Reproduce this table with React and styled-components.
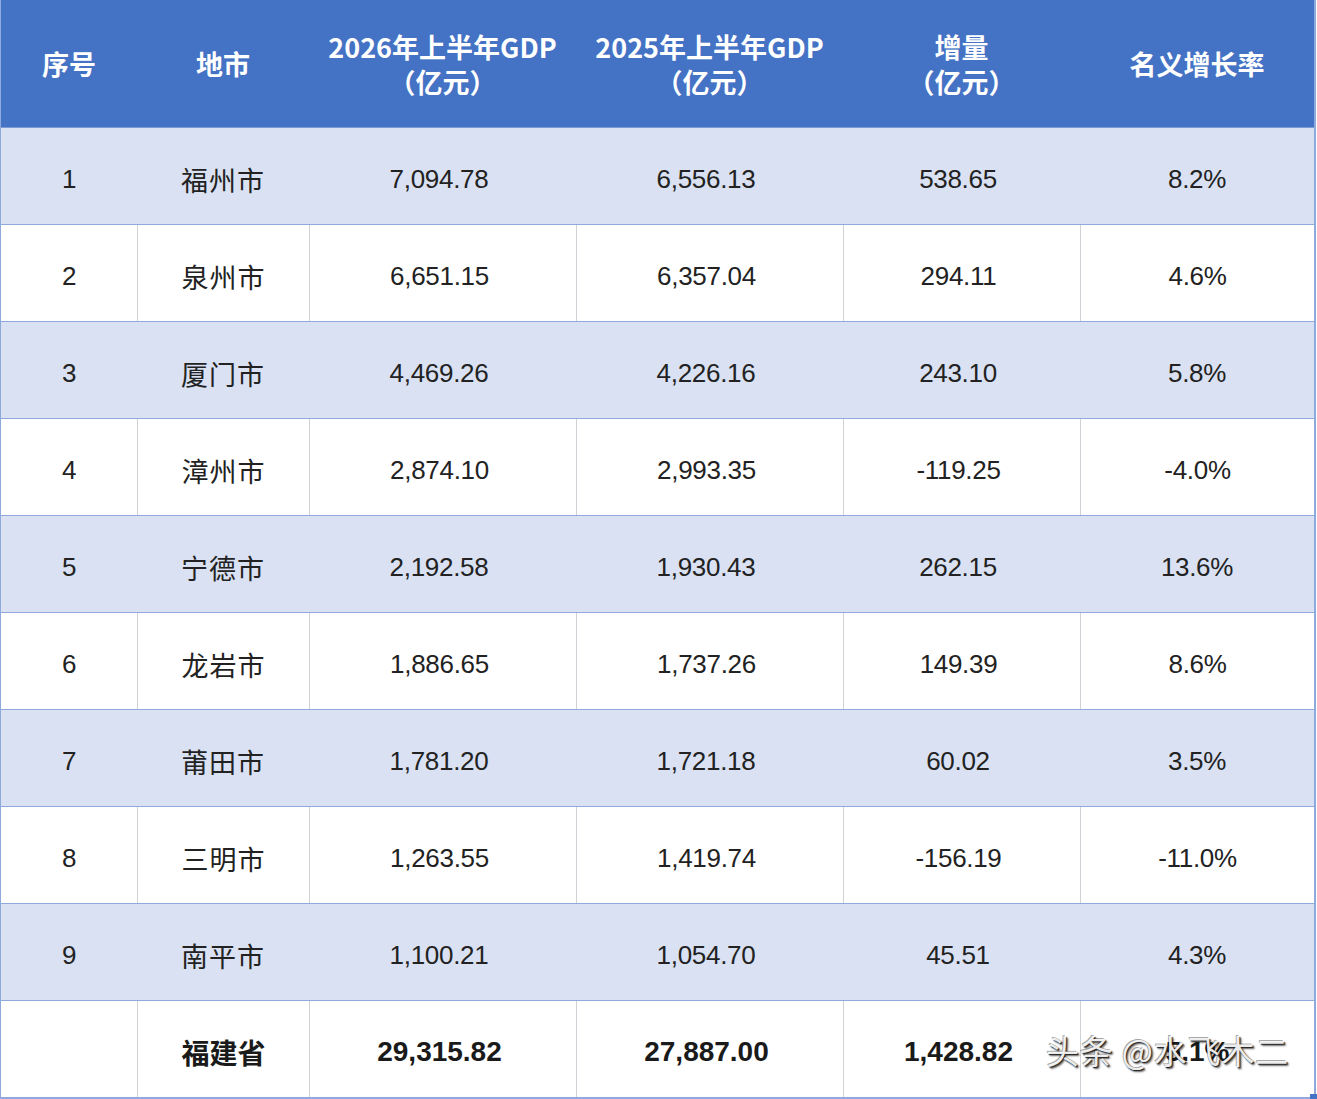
import React from 'react';
import styled, { createGlobalStyle, css } from 'styled-components';

const GlobalStyle = createGlobalStyle`
  html, body {
    margin: 0;
    padding: 0;
    background: #ffffff;
  }
  body {
    font-family: "Liberation Sans", "Noto Sans CJK SC", sans-serif;
    color: #222222;
  }
`

const rows = [
  ['1', '福州市', '7,094.78', '6,556.13', '538.65', '8.2%'],
  ['2', '泉州市', '6,651.15', '6,357.04', '294.11', '4.6%'],
  ['3', '厦门市', '4,469.26', '4,226.16', '243.10', '5.8%'],
  ['4', '漳州市', '2,874.10', '2,993.35', '-119.25', '-4.0%'],
  ['5', '宁德市', '2,192.58', '1,930.43', '262.15', '13.6%'],
  ['6', '龙岩市', '1,886.65', '1,737.26', '149.39', '8.6%'],
  ['7', '莆田市', '1,781.20', '1,721.18', '60.02', '3.5%'],
  ['8', '三明市', '1,263.55', '1,419.74', '-156.19', '-11.0%'],
  ['9', '南平市', '1,100.21', '1,054.70', '45.51', '4.3%'],
]

const columns = '136px 172px 267px 267px 237px 1fr'

const Table = styled.div`
  width: 1316px;
  border-left: 1px solid #8ea9db;
  border-right: 2px solid #8ea9db;
  border-bottom: 2px solid #8ea9db;
  box-sizing: border-box;
  position: relative;
`

const HeaderRow = styled.div`
  display: grid;
  grid-template-columns: ${columns};
  height: 128px;
  background: #4472c4;
  border-bottom: 1px solid #7d9bd3;
  box-sizing: border-box;
`

const HeadCell = styled.div`
  display: flex;
  flex-direction: column;
  align-items: center;
  justify-content: center;
  color: #ffffff;
  font-family: "Noto Sans CJK SC", "Liberation Sans", sans-serif;
  font-weight: 700;
  font-size: 27px;
  line-height: 35px;
  text-align: center;
`

const Row = styled.div`
  display: grid;
  grid-template-columns: ${columns};
  height: 97px;
  box-sizing: border-box;
  border-bottom: 1px solid #8ea9db;
  background: ${p => (p.$shaded ? '#d9e1f2' : '#ffffff')};
  &:last-child {
    border-bottom: none;
  }
`

const Cell = styled.div`
  display: flex;
  align-items: center;
  justify-content: center;
  padding-top: 6px;
  padding-right: ${p => (p.$num ? '7px' : '0')};
  box-sizing: border-box;
  font-size: 26px;
  letter-spacing: -0.3px;
  position: relative;
  ${p => p.$divider && css`
    border-left: 1px solid #cfd1d6;
  `}
  ${p => p.$city && css`
    font-family: "Noto Sans CJK SC", sans-serif;
    font-size: 27px;
    letter-spacing: 1px;
  `}
  ${p => p.$bold && css`
    font-weight: 700;
    font-size: 28px;
    letter-spacing: 0;
    color: #1a1a1a;
  `}
`

const Watermark = styled.span`
  position: absolute;
  left: -35px;
  top: 25px;
  font-family: "Noto Sans CJK SC", sans-serif;
  font-size: 33px;
  font-weight: 400;
  letter-spacing: 0.8px;
  white-space: nowrap;
  color: rgba(255, 255, 255, 0.92);
  text-shadow: 1px 1px 1px #222, 2px 2px 2px rgba(0, 0, 0, 0.6), -1px -1px 0 rgba(0, 0, 0, 0.35);
`

const Handle = styled.span`
  position: absolute;
  right: -3px;
  bottom: -3px;
  width: 7px;
  height: 7px;
  background: #4472c4;
`

const App = () => (
  <>
    <GlobalStyle />
    <Table>
      <HeaderRow>
        <HeadCell>序号</HeadCell>
        <HeadCell>地市</HeadCell>
        <HeadCell>
          <span>2026年上半年GDP</span>
          <span>（亿元）</span>
        </HeadCell>
        <HeadCell>
          <span>2025年上半年GDP</span>
          <span>（亿元）</span>
        </HeadCell>
        <HeadCell>
          <span>增量</span>
          <span>（亿元）</span>
        </HeadCell>
        <HeadCell>名义增长率</HeadCell>
      </HeaderRow>
      {rows.map((r, i) => {
        const shaded = i % 2 === 0
        return (
          <Row key={r[0]} $shaded={shaded}>
            {r.map((v, j) => (
              <Cell key={j} $divider={!shaded && j > 0} $city={j === 1} $num={j >= 2 && j <= 4}>
                {v}
              </Cell>
            ))}
          </Row>
        )
      })}
      <Row>
        <Cell />
        <Cell $divider $city $bold>福建省</Cell>
        <Cell $divider $bold $num>29,315.82</Cell>
        <Cell $divider $bold $num>27,887.00</Cell>
        <Cell $divider $bold $num>1,428.82</Cell>
        <Cell $divider $bold>
          5.1%
          <Watermark>头条 @水飞木二</Watermark>
        </Cell>
      </Row>
      <Handle />
    </Table>
  </>
)

export default App
